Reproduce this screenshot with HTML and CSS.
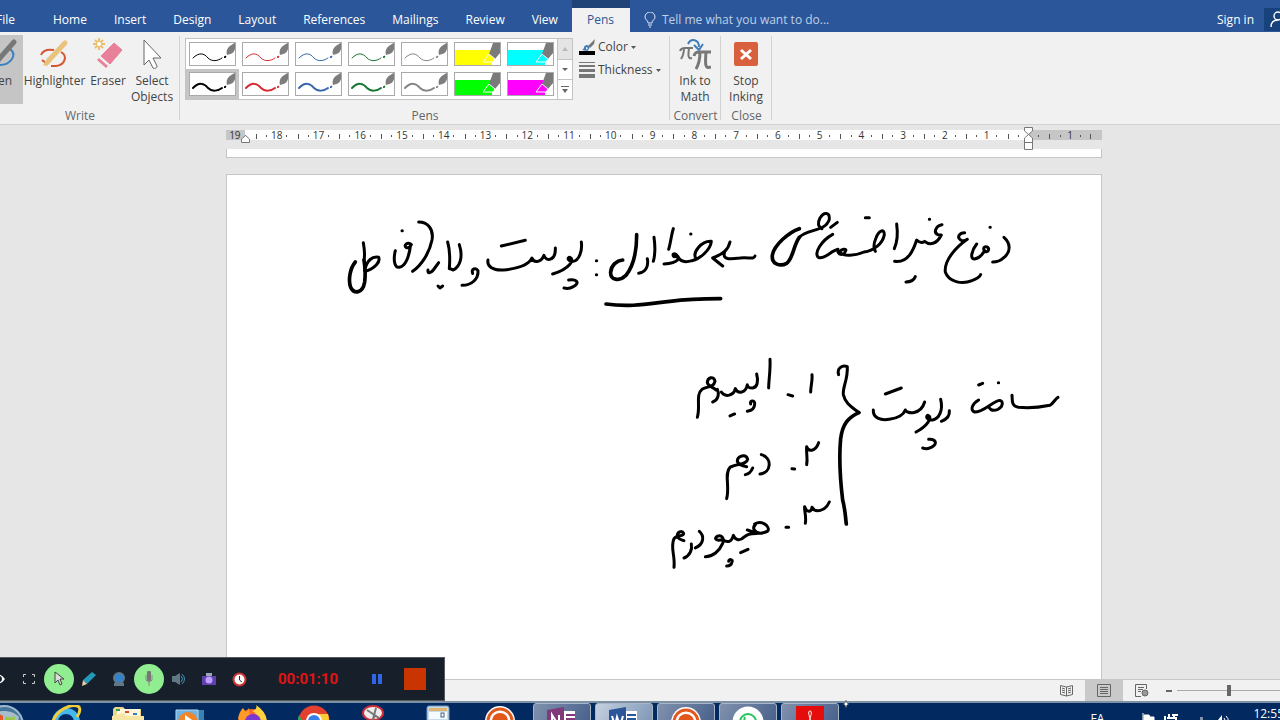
FILE: index.html
```html
<!DOCTYPE html>
<html lang="en">
    <head>
        <meta charset="utf-8">
        <title>Word - Pens</title>
        <link rel="stylesheet" href="styles.css">
    </head>
    <body>
        <svg class="defs">
            <symbol id="pen" viewBox="0 0 45 22">
                <path d="M3 15 C9 9 14 10 18 15 C22 19 28 18 32 15" fill="none" stroke="currentColor" stroke-linecap="round"/>
                <path d="M34 14 l2 -1 -1 2z" fill="currentColor" stroke="currentColor" stroke-width="1"/>
                <path d="M37 12 C35 6 40 2 45 0 V6 C44 10 41 11 37 12z" fill="#7d7d7d" stroke="none"/>
            </symbol>
            <symbol id="marker" viewBox="0 0 45 22">
                <path d="M0 7 H37 V22 H0z" fill="currentColor"/>
                <path d="M38 0 H45 V10 L40 16 L34 11z" fill="#7a7a7a"/>
                <path d="M34 11 L28 19 H38 L40 16z" fill="currentColor" stroke="#fff"/>
            </symbol>
            <symbol id="orange" viewBox="0 0 32 32">
                <circle cx="16" cy="16" r="15" fill="#fff"/>
                <circle cx="16" cy="16" r="12" fill="none" stroke="#e2571b" stroke-width="3"/>
                <circle cx="16" cy="16" r="8" fill="#e2571b"/>
            </symbol>
        </svg>

        <header class="titlebar">
            <nav class="tabs">
                <button class="tab">File</button>
                <button class="tab">Home</button>
                <button class="tab">Insert</button>
                <button class="tab">Design</button>
                <button class="tab">Layout</button>
                <button class="tab">References</button>
                <button class="tab">Mailings</button>
                <button class="tab">Review</button>
                <button class="tab">View</button>
                <button class="tab active">Pens</button>
            </nav>
            <button class="tellme">
                <svg width="12" height="16" viewBox="0 0 12 16" fill="none" stroke="#dce6f4"><path d="M4 11 C4 8 1 8 1 5 A4.5 4.5 0 0 1 11 5 C11 8 8 8 8 11z M4 13 H8 M5 15 H7"/></svg>
                Tell me what you want to do...
            </button>
            <button class="signin">Sign in</button>
            <button class="share" aria-label="Share">
                <svg width="18" height="18" viewBox="0 0 18 18" fill="none" stroke="#fff" stroke-width="1.4"><circle cx="8" cy="6" r="4"/><path d="M1 17 C1 12 4 10 8 10 M12 13 h6 M15 10 v6"/></svg>
            </button>
        </header>

        <section class="ribbon">
            <div class="group write">
                <div class="tools">
                    <button class="tool pressed">
                        <svg width="32" height="32" viewBox="0 0 32 32" fill="none"><path d="M12 12 C1 17 2 27 14 27 C24 27 32 17 24 11" stroke="#3b7fc4" stroke-width="2"/><path d="M28 4 L13 21" stroke="#777" stroke-width="5" stroke-linecap="round"/><path d="M11 19 L8 26 L15 23z" fill="#777"/></svg>
                        <span>Pen</span>
                    </button>
                    <button class="tool wide">
                        <svg width="32" height="32" viewBox="0 0 32 32" fill="none"><path d="M2 17 C4 12 9 11 15 12 M22 14 C29 18 26 27 17 28 H12 M3 22 L7 25" stroke="#d65532" stroke-width="2"/><path d="M26 5 L11 21" stroke="#e9c27c" stroke-width="5" stroke-linecap="round"/><path d="M9 19 L4 27 L8 28 L13 23z" fill="#e9c27c"/></svg>
                        <span>Highlighter</span>
                    </button>
                    <button class="tool">
                        <svg width="32" height="32" viewBox="0 0 32 32"><path d="M7 0 V12 M1 6 H13 M3 2 L11 10 M11 2 L3 10" stroke="#eabf69" stroke-width="2"/><circle cx="7" cy="6" r="2" fill="#fff"/><path d="M22 5 L30 12 L18 26 L9 18z" fill="#e8809a" stroke="#e8809a" stroke-linejoin="round"/><path d="M7 20 L16 28 L14 30 L5 22z" fill="#e8809a"/></svg>
                        <span>Eraser</span>
                    </button>
                    <button class="tool">
                        <svg width="32" height="32" viewBox="0 0 32 32"><path d="M8 2 V27 L13 22 L17 30 C19 31 21 30 21 28 L17 20 H25z" fill="#fff" stroke="#666"/></svg>
                        <span>Select<br>Objects</span>
                    </button>
                </div>
                <div class="caption">Write</div>
            </div>

            <div class="group pens">
                <div class="tools">
                    <div class="gallery">
                        <div class="swatches">
                            <button class="swatch black thin" aria-label="Black pen"><svg><use href="#pen"/></svg></button>
                            <button class="swatch red thin" aria-label="Red pen"><svg><use href="#pen"/></svg></button>
                            <button class="swatch blue thin" aria-label="Blue pen"><svg><use href="#pen"/></svg></button>
                            <button class="swatch green thin" aria-label="Green pen"><svg><use href="#pen"/></svg></button>
                            <button class="swatch gray thin" aria-label="Gray pen"><svg><use href="#pen"/></svg></button>
                            <button class="swatch yellow" aria-label="Yellow highlighter"><svg><use href="#marker"/></svg></button>
                            <button class="swatch cyan" aria-label="Cyan highlighter"><svg><use href="#marker"/></svg></button>
                            <button class="swatch black thick selected" aria-label="Black thick pen"><svg><use href="#pen"/></svg></button>
                            <button class="swatch red thick" aria-label="Red thick pen"><svg><use href="#pen"/></svg></button>
                            <button class="swatch blue thick" aria-label="Blue thick pen"><svg><use href="#pen"/></svg></button>
                            <button class="swatch green thick" aria-label="Green thick pen"><svg><use href="#pen"/></svg></button>
                            <button class="swatch gray thick" aria-label="Gray thick pen"><svg><use href="#pen"/></svg></button>
                            <button class="swatch lime" aria-label="Green highlighter"><svg><use href="#marker"/></svg></button>
                            <button class="swatch magenta" aria-label="Pink highlighter"><svg><use href="#marker"/></svg></button>
                        </div>
                        <div class="scroller">
                            <button disabled aria-label="Row up"><svg width="6" height="4"><path d="M0 4 L3 0 L6 4z" fill="#bbb"/></svg></button>
                            <button aria-label="Row down"><svg width="6" height="4"><path d="M0 0 L3 3 L6 0z" fill="#666"/></svg></button>
                            <button aria-label="More"><svg width="8" height="8"><path d="M0 0 H8 V1 H0z M1 3 L4 7 L7 3z" fill="#666"/></svg></button>
                        </div>
                    </div>
                    <div class="options">
                        <button class="option">
                            <svg width="16" height="16" viewBox="0 0 16 16"><path d="M16 0 L15 5 L11 9 L9 7z" fill="#777"/><path d="M3 11 C6 10 4 6 8 6 C11 7 11 10 8 12z" fill="#3f7cb8"/><path d="M7 8 l2 1 -2 2z" fill="#fff"/><path d="M0 12 H16 V16 H0z"/></svg>
                            Color<svg width="5" height="3"><path d="M0 0 H5 L2.500 3z" fill="#555"/></svg>
                        </button>
                        <button class="option">
                            <svg width="16" height="16" viewBox="0 0 16 16"><path d="M0 0 H16 V1 H0z M0 3 H16 V5 H0z M0 7 H16 V10 H0z M0 12 H16 V16 H0z" fill="#777"/></svg>
                            Thickness<svg width="5" height="3"><path d="M0 0 H5 L2.500 3z" fill="#555"/></svg>
                        </button>
                    </div>
                </div>
                <div class="caption">Pens</div>
            </div>

            <div class="group small">
                <div class="tools">
                    <button class="tool">
                        <svg width="32" height="32" viewBox="0 0 32 32" fill="none"><path d="M1 13 C2 10 4 10 6 10 H14 M5 10 C5 16 4 18 2 21 M10 10 C9 18 9 21 13 20" stroke="#777" stroke-width="2"/><path d="M15 18 C16 14 18 14 20 14 H32 M21 14 C21 22 20 26 17 31 M27 14 C26 27 26 31 32 29" stroke="#777" stroke-width="3"/><path d="M9 6 C12 0 20 1 20 9" stroke="#3f7cb8" stroke-width="2"/><path d="M15 7 L20 12 L24 6" stroke="#3f7cb8" stroke-width="2"/></svg>
                        <span>Ink to<br>Math</span>
                    </button>
                </div>
                <div class="caption">Convert</div>
            </div>

            <div class="group small">
                <div class="tools">
                    <button class="tool">
                        <svg width="32" height="32" viewBox="0 0 32 32"><rect x="4" y="4" width="24" height="24" rx="2" fill="#d9603f"/><path d="M11 12 L21 21 M21 12 L11 21" stroke="#fff" stroke-width="3"/></svg>
                        <span>Stop<br>Inking</span>
                    </button>
                </div>
                <div class="caption">Close</div>
            </div>
        </section>

        <main class="workspace">
            <div class="ruler">
                <div class="cells">
                    <span>19</span><span>18</span><span>17</span><span>16</span><span>15</span><span>14</span><span>13</span><span>12</span><span>11</span><span>10</span><span>9</span><span>8</span><span>7</span><span>6</span><span>5</span><span>4</span><span>3</span><span>2</span><span>1</span><span></span><span>1</span>
                </div>
                <svg class="marker left" width="9" height="8" viewBox="0 0 9 8"><path d="M.5 7.500 V4 L4.500 .5 L8.500 4 V7.500z" fill="#fff" stroke="#777"/></svg>
                <svg class="marker right" width="9" height="23" viewBox="0 0 9 23"><path d="M.5 .5 H8.500 V4 L.5 11 V22.500 H8.500 V11 L.5 4z M.5 15.500 H8.500" fill="#fff" stroke="#777"/></svg>
            </div>
            <div class="prev-page"></div>
            <div class="page">
                <!-- ink layer -->
                <svg class="ink" viewBox="227 175 874 505" preserveAspectRatio="xMidYMin meet">
                    <g transform="translate(760 200) scale(.3333)">
                        <path d="M732 112 C752 130 754 156 730 174 C720 184 708 186 698 186 M690 82 h1"/>
                        <path d="M650 132 C636 150 628 178 644 177 C662 174 668 162 674 152 C664 140 682 136 686 146 C686 156 676 158 672 152"/>
                        <path d="M614 98 C598 98 590 112 602 120 C608 124 616 122 622 118 C590 140 552 180 556 216 C566 246 606 254 636 242 C652 236 660 228 662 224"/>
                        <path d="M546 74 C526 78 520 98 534 104 L544 105 C530 134 508 136 494 124 C486 130 478 128 470 120 C462 145 446 190 404 184 M508 58 h1 M438 246 C450 246 462 240 466 230"/>
                        <path d="M410 72 C414 100 410 130 403 146"/>
                        <path d="M218 103 C184 122 160 160 176 173 C196 178 210 154 234 148 C230 166 252 168 256 154 C264 144 240 146 242 156 C246 172 290 166 312 156 C340 152 368 132 373 104 C373 84 356 92 348 114 C340 132 340 144 346 154 M316 53 L328 53"/>
                        <path class="bold" d="M118 86 C88 96 42 134 37 166 C34 194 62 200 80 190 C100 174 98 142 118 112"/>
                        <path d="M118 112 C142 86 196 96 208 58 C210 36 192 34 180 54 C172 70 174 80 186 86 M212 82 L232 67"/>
                    </g>
                    <g transform="translate(590 200) scale(.3333)">
                        <path d="M420 126 C414 152 398 162 368 174 L398 198 M404 156 C396 180 420 178 450 174 C474 170 492 180 495 168"/>
                        <path d="M318 176 C306 158 334 122 364 124 C362 148 330 178 306 182 C286 188 270 184 264 170 C254 156 244 162 252 170 C276 168 268 190 222 192 M302 102 h1"/>
                        <path d="M250 86 C244 104 242 128 236 148 M192 112 C196 140 194 170 190 184 M172 176 C176 198 168 216 146 220"/>
                        <path class="bold" d="M140 104 C140 150 132 196 108 226 C88 246 60 240 62 216 C64 195 80 182 98 180"/>
                        <path d="M19 182 h1 M19 224 h1"/>
                        <path class="bold" d="M48 312 C120 322 170 312 240 304 C300 296 340 296 392 296"/>
                    </g>
                    <g transform="translate(340 200) scale(.3333)">
                        <path d="M724 126 C728 155 716 182 700 184 C684 186 680 172 690 172 C705 178 690 206 638 222 M686 240 C712 236 720 250 700 260 C690 266 680 266 672 264"/>
                        <path d="M444 180 C440 200 460 212 490 210 C535 206 566 196 576 174 C580 188 602 190 612 166 C616 184 648 186 646 144 M484 138 L556 121"/>
                        <path d="M398 220 C392 206 408 202 414 212 C416 236 396 256 366 256"/>
                        <path d="M323 126 C330 150 330 180 328 206 M358 134 C370 170 360 200 340 210 L330 206"/>
                        <path d="M264 210 C262 222 272 220 280 210 L296 188 M294 258 L300 264 L308 258"/>
                        <path d="M236 66 C262 66 282 86 276 120 C268 160 244 196 218 214"/>
                        <path d="M166 152 C160 176 162 204 178 202 C196 200 208 170 212 132 C202 126 190 136 198 142 C206 146 210 142 214 134 M186 92 h1"/>
                        <path class="bold" d="M72 180 C76 206 76 230 74 246 C68 282 42 282 32 262 C24 240 30 205 46 186"/>
                        <path d="M70 128 C74 150 74 170 72 180 M74 212 C80 180 98 168 116 172 C122 186 104 206 76 214"/>
                    </g>
                    <g transform="translate(660 350) scale(.3333)">
                        <path d="M456 74 C458 90 452 110 452 126 M384 134 L398 138 M330 28 C332 60 326 90 326 114"/>
                        <path d="M290 72 C296 94 292 112 278 114 C266 114 262 110 262 104 C258 126 236 136 226 116 C222 136 196 144 184 126 M172 118 C178 130 176 150 158 156 M210 198 L224 192 M272 162 C268 150 286 150 284 162 C284 178 274 182 262 184"/>
                        <path d="M112 202 C122 170 106 134 126 118 C142 108 160 114 165 94 C162 76 142 82 142 98 C144 108 160 112 168 120"/>
                        <path d="M536 74 C530 56 546 44 562 50 C564 90 548 108 550 134 C556 162 580 174 597 188"/>
                        <path class="bold" d="M597 188 C566 202 548 220 542 266 C536 330 542 400 548 450 C556 480 556 500 559 522"/>
                        <path d="M440 344 C444 325 438 310 440 290 C444 306 466 306 476 278 M396 356 L404 357"/>
                        <path d="M304 314 C338 324 334 368 300 372 M278 354 C274 364 266 372 256 374"/>
                        <path d="M200 446 C210 410 192 370 210 352 C228 340 260 346 263 328 C258 310 232 318 232 334 C236 344 248 348 260 350"/>
                        <path d="M436 520 C440 500 432 480 434 470 C440 488 454 488 456 472 C466 490 496 484 508 456 M378 532 L386 532"/>
                        <path d="M284 522 C308 508 330 532 324 542 C308 554 284 550 262 540 M286 524 C276 534 282 546 300 550 M322 544 C300 556 268 544 254 560 C240 574 226 572 220 556 C216 576 202 580 188 568 C174 574 160 568 170 560 C184 552 194 564 188 580 C178 604 158 620 136 620 M242 608 L264 598 M206 634 C206 626 220 628 216 636 C214 646 208 648 200 648"/>
                        <path d="M118 544 C134 558 132 582 106 594 M94 582 C98 600 88 618 72 624 M42 652 C46 614 30 594 42 566 C52 552 70 562 71 550 C66 540 50 546 52 560 C60 572 66 570 72 572"/>
                    </g>
                    <g transform="translate(830 350) scale(.3333)">
                        <path d="M546 136 C548 150 542 168 566 172 C600 176 640 170 660 166 C670 160 676 146 684 142"/>
                        <path d="M446 150 C428 160 418 180 434 186 C456 186 476 166 496 156 C520 142 524 166 504 178 C484 186 478 176 476 168 M446 105 L458 100 M505 98 h1"/>
                        <path d="M358 182 C360 198 350 208 334 214"/>
                        <path d="M332 148 C340 180 328 206 308 210 C290 212 286 198 294 196 C310 202 290 230 258 246 M296 268 C318 266 324 282 304 292 C294 298 284 296 278 294"/>
                        <path d="M130 180 C128 204 152 212 178 208 C206 204 220 196 226 180 C230 192 272 196 284 156 M166 132 L214 114"/>
                    </g>
                </svg>
            </div>
        </main>

        <footer class="statusbar">
            <button aria-label="Read mode"><svg width="13" height="13" viewBox="0 0 13 13" fill="none" stroke="#666"><path d="M.5 1.500 L6.500 3 L12.500 1.500 V10.500 L6.500 12 L.5 10.500z M6.500 3 V12 M2 4 l3 1 M2 6 l3 1 M2 8 l3 1 M8 5 l3 -1 M8 7 l3 -1 M8 9 l3 -1"/></svg></button>
            <button class="on" aria-label="Print layout"><svg width="14" height="13" viewBox="0 0 14 13" fill="none" stroke="#666"><path d="M.5 .5 H13.500 V12.500 H.5z M3 3.500 H11 M3 5.500 H11 M3 7.500 H11 M3 9.500 H11"/></svg></button>
            <button aria-label="Web layout"><svg width="14" height="13" viewBox="0 0 14 13" fill="none" stroke="#666"><path d="M6 12.500 H.5 V.5 H11.500 V5 M3 3.500 H9 M3 5.500 H8 M3 7.500 H6"/><circle cx="10" cy="9" r="3" fill="#999"/></svg></button>
            <button class="minus" aria-label="Zoom out"><svg width="6" height="2"><path d="M0 0 H6 V2 H0z" fill="#666"/></svg></button>
            <input class="zoom" type="range" min="10" max="190" value="100" aria-label="Zoom">
        </footer>

        <footer class="taskbar">
            <div class="apps">
                <button aria-label="Start"><svg width="40" height="40" viewBox="0 0 40 40"><circle cx="20" cy="20" r="19" fill="#46759a" stroke="#9bb8cc" stroke-width="2"/><path d="M5 12 C12 4 28 4 35 12 L34 18 H6z" fill="#a7bdcb"/><path d="M10 11 Q15 8 19 11 V20 H9z" fill="#e8592a"/><path d="M21 11 Q26 14 31 11 L30 20 H21z" fill="#9ac93c"/></svg></button>
                <button aria-label="Internet Explorer"><svg width="32" height="32" viewBox="0 0 32 32" fill="none"><circle cx="16" cy="17" r="11" stroke="#45b8ed" stroke-width="6"/><path d="M7 17 H26" stroke="#a6e2fa" stroke-width="4"/><path d="M2 19 C6 4 22 -2 29 2 C31 5 29 9 27 12" stroke="#f3ce39" stroke-width="3"/></svg></button>
                <button aria-label="Explorer"><svg width="32" height="32" viewBox="0 0 32 32"><path d="M1 4 L3 2 H11 L13 4 H29 V30 H1z" fill="#ecd58a"/><path d="M5 4 h23 v8 H5z" fill="#fff7dc"/><path d="M4 4 h4 v2 H4z" fill="#36a14c"/><path d="M13 6 h4 v2 h-4z" fill="#d14d2b"/><path d="M21 8 h4 v2 h-4z" fill="#347fc2"/><path d="M0 11 L12 8 L15 11 H32 V32 H0z" fill="#f7e5a4"/></svg></button>
                <button aria-label="Media Player"><svg width="32" height="32" viewBox="0 0 32 32"><path d="M8 5 H30 V30 H8z" fill="#3b82b4"/><path d="M2 5 H24 V30 H2z" fill="#71b2df" stroke="#b4daf1"/><circle cx="14" cy="17" r="10" fill="#ee862c"/><path d="M11 10 L21 17 L11 23z" fill="#fff"/></svg></button>
                <button aria-label="Firefox"><svg width="32" height="32" viewBox="0 0 32 32"><circle cx="16" cy="18" r="14" fill="#ff6330"/><path d="M2 14 Q3 7 7 3 L10 7 L13 3 L14 10 L6 17z" fill="#ff9a27"/><path d="M16 6 Q22 4 20 0 Q31 7 31 18 L27 28 Q27 12 16 6" fill="#ffd23b"/><circle cx="17" cy="17" r="8" fill="#7b38d0"/></svg></button>
                <button aria-label="Chrome"><svg width="32" height="32" viewBox="0 0 32 32"><circle cx="16" cy="16" r="15.500" fill="#e3402f"/><path d="M1 10 L9 23 L16 31 C5 31 -3 20 1 10" fill="#30a650"/><path d="M16 9 H30 C34 23 25 31 16 31z" fill="#fbcc31"/><circle cx="16" cy="16" r="8" fill="#fff"/><circle cx="16" cy="16" r="6" fill="#387ee8"/></svg></button>
                <button aria-label="Snipping Tool"><svg width="32" height="32" viewBox="0 0 32 32"><ellipse cx="13" cy="8" rx="10" ry="7" fill="#eee" stroke="#cf2e39" stroke-width="2"/><path d="M7 5 L19 13 M16 3 L13 14 M15 11 L5 25" stroke="#777" stroke-width="2"/></svg></button>
                <button aria-label="Calculator"><svg width="24" height="32" viewBox="0 0 24 32"><rect x="1" y="1" width="22" height="28" rx="2" fill="#c6dced" stroke="#7999b5"/><path d="M3 3 H21 V6 H3z" fill="#e2b36f"/><path d="M3 7 H21 V14 H3z" fill="#f5fbff"/><rect x="15" y="8" width="3" height="4" fill="none" stroke="#416280"/></svg></button>
                <button aria-label="Recorder"><svg width="32" height="32"><use href="#orange"/></svg></button>
                <button class="open" aria-label="OneNote"><svg width="32" height="32" viewBox="0 0 32 32"><path d="M14 5 H29 V28 H14z" fill="#fff"/><path d="M20 9 h9 M20 13 h9 M20 17 h9" stroke="#80397b" stroke-width="2"/><path d="M1 4 L18 1 V31 L1 28z" fill="#80397b"/><path d="M6 20 V9 L13 20 V9" stroke="#fff" stroke-width="2" fill="none"/></svg></button>
                <button class="open current" aria-label="Word"><svg width="32" height="32" viewBox="0 0 32 32"><path d="M14 5 H29 V28 H14z" fill="#fff"/><path d="M19 9 h9 M19 13 h9 M19 17 h9" stroke="#2b579a" stroke-width="2"/><path d="M1 4 L18 1 V31 L1 28z" fill="#2b579a"/><path d="M4 10 L7 20 L9 11 L12 20 L15 10" stroke="#fff" stroke-width="2" fill="none"/></svg></button>
                <button class="open" aria-label="Screen recorder"><svg width="32" height="32"><use href="#orange"/></svg></button>
                <button class="open" aria-label="WhatsApp"><svg width="32" height="32" viewBox="0 0 32 32"><circle cx="16" cy="16" r="15.500" fill="#fff"/><circle cx="16" cy="16" r="8" fill="none" stroke="#28c55a" stroke-width="2"/><path d="M13 11 C11 15 15 20 20 20" stroke="#28c55a" stroke-width="2" fill="none"/></svg></button>
                <button class="open" aria-label="Acrobat"><svg width="28" height="32" viewBox="0 0 28 32"><path d="M0 0 H28 V32 H0z" fill="#e50c0c"/><path d="M14 5 C11 5 14 11 14 14 L9 20 M14 14 L19 20 M14 5 C17 5 14 11 14 14" stroke="#fff" fill="none"/></svg></button>
            </div>
            <div class="tray">
                <span class="lang">FA</span>
                <svg width="14" height="16" viewBox="0 0 14 16"><path d="M2 16 V1 M3 3 H8 L9 5 H13 V12 H3z" fill="#fff" stroke="#fff"/></svg>
                <svg width="16" height="16" viewBox="0 0 16 16"><path d="M3 6 H12 V15 M5 6 V2 M10 6 V2 M1 4 V15 M8 3 H14" fill="none" stroke="#fff" stroke-width="2"/></svg>
                <svg width="16" height="16" viewBox="0 0 16 16"><path d="M11 16 V5 H14 V16z M7 16 V9 H9 V16z" fill="#8292ae"/></svg>
                <svg width="16" height="16" viewBox="0 0 16 16"><path d="M1 8 H4 L8 3 V16 L4 12 H1z" fill="#fff"/><path d="M10 6 Q13 9 10 13 M12 4 Q17 9 12 15" stroke="#fff" fill="none"/></svg>
                <span class="clock">12:55</span>
            </div>
        </footer>

        <!-- floating recorder window -->
        <div class="recorder">
            <button aria-label="Preview"><svg width="14" height="12" viewBox="0 0 14 12"><path d="M0 6 Q7 -3 13 6 Q7 15 0 6z" fill="#fff"/><circle cx="7" cy="6" r="3" fill="#17202a"/></svg></button>
            <button aria-label="Full screen"><svg width="12" height="10" viewBox="0 0 12 10"><path d="M.5 3 V.5 H3 M9 .5 H11.500 V3 M11.500 7 V9.500 H9 M3 9.500 H.5 V7" fill="none" stroke="#ccc"/></svg></button>
            <button class="on" aria-label="Cursor"><svg width="12" height="16" viewBox="0 0 12 16"><path d="M2 1 V12 L5 9 L7 14 L9 13 L7 8 H11z" fill="#ddd" stroke="#444"/></svg></button>
            <button aria-label="Draw"><svg width="16" height="16" viewBox="0 0 16 16"><path d="M11 1 L15 4 L6 13 L2 9z" fill="#239ab9"/><path d="M2 9 L6 13 L1 15z" fill="#eec9a8"/></svg></button>
            <button aria-label="Webcam"><svg width="14" height="14" viewBox="0 0 14 14"><path d="M2 11 H12 V14 H2z" fill="#607786"/><circle cx="7" cy="6" r="6" fill="#607786"/><circle cx="7" cy="6" r="4" fill="#3183cf"/></svg></button>
            <button class="on" aria-label="Microphone"><svg width="8" height="16" viewBox="0 0 8 16"><rect x="2" y="0" width="4" height="10" rx="1" fill="#777"/><path d="M1 4 V9 Q4 13 7 9 V4 M4 10 V15" fill="none" stroke="#888"/></svg></button>
            <button aria-label="Sound"><svg width="15" height="14" viewBox="0 0 15 14"><path d="M0 4 H3 L8 1 V13 L3 10 H0z" fill="#607786"/><path d="M9 4 Q12 7 9 10 M10 2 Q15 7 10 12" fill="none" stroke="#4796bc"/></svg></button>
            <button aria-label="Snapshot"><svg width="14" height="14" viewBox="0 0 14 14"><path d="M0 4 H4 V2 H10 V4 H14 V13 H0z" fill="#6040ae"/><path d="M4 1 H10 V4 H4z" fill="#9ba6bd"/><circle cx="7" cy="8" r="3.500" fill="#bda0ff"/></svg></button>
            <button aria-label="Schedule"><svg width="15" height="15" viewBox="0 0 15 15"><circle cx="7.500" cy="7.500" r="6" fill="#fff" stroke="#c63232" stroke-width="2"/><path d="M7.500 4 V8 L10 10" fill="none" stroke="#333"/></svg></button>
            <output class="timer">00:01:10</output>
            <button class="pause" aria-label="Pause"><svg width="12" height="12"><path d="M1 1 H5 V11 H1z M7 1 H11 V11 H7z" fill="#3265e6"/></svg></button>
            <button class="stop" aria-label="Stop"><svg width="22" height="22"><path d="M0 0 H22 V22 H0z" fill="#c83402"/></svg></button>
        </div>
        <svg class="pointer" width="6" height="8" viewBox="0 0 6 8"><path d="M3 0 L4 3 L6 4 L4 5 L3 8 L2 5 L0 4 L2 3z" fill="#fff" stroke="#333" stroke-width=".5"/></svg>
    </body>
</html>
```
FILE: styles.css
```css
* { box-sizing: border-box; }
body {
    margin: 0;
    height: 100vh;
    display: flex;
    flex-direction: column;
    overflow: hidden;
    background-color: #e6e6e6;
    color: #444;
    font-family: "Open Sans", "Noto Sans", sans-serif;
    font-size: 12px;
    line-height: 16px;
}
button {
    border: 0;
    padding: 0;
    background: none;
    color: inherit;
    font: inherit;
}
svg { flex: none; }
.defs {
    position: absolute;
    width: 0;
    height: 0;
}

/* title bar and tabs */
.titlebar {
    flex: none;
    display: flex;
    height: 32px;
    background-color: #2b579a;
    color: #fff;
}
.tabs {
    display: flex;
    margin-left: -17px;
}
.tab {
    padding: 8px 14px 0 13px;
}
.tab:first-child { margin-right: 11px; }
.tab.active {
    padding: 0 16px 0 15px;
    border-top: 8px solid #1f4377;
    background-color: #f1f1f1;
    color: #2b579a;
}
.tellme {
    display: flex;
    align-items: center;
    gap: 6px;
    padding: 8px 0 0 14px;
    color: #bfcfe6;
}
.signin {
    margin-left: auto;
    padding: 8px 10px 0;
}
.share {
    width: 16px;
    height: 23px;
    margin-top: 8px;
    padding: 2px 0 0 6px;
    overflow: hidden;
    background-color: #17427c;
}

/* ribbon */
.ribbon {
    flex: none;
    display: flex;
    height: 93px;
    background-color: #f1f1f1;
    border-bottom: 1px solid #d2d2d2;
}
.group {
    position: relative;
    display: flex;
    flex-direction: column;
    justify-content: space-between;
    padding: 3px 0 0;
}
.group::after {
    content: "";
    position: absolute;
    right: 0;
    top: 4px;
    bottom: 4px;
    border-right: 1px solid #d2d2d2;
}
.write {
    width: 203px;
    margin-left: -23px;
    padding-left: 3px;
}
.pens { width: 490px; }
.small { width: 51px; }
.tools { display: flex; }
.tool {
    display: flex;
    flex-direction: column;
    align-items: center;
    gap: 3px;
    width: 44px;
    height: 69px;
    padding-top: 3px;
}
.small .tool { width: 50px; }
.tool.wide { width: 63px; }
.tool.pressed {
    width: 43px;
    background-color: #c5c5c5;
}
.caption {
    text-align: center;
    color: #666;
}
.gallery {
    display: flex;
    margin: 3px 0 0 5px;
    border: 1px solid #c3c3c3;
    background-color: #fff;
}
.swatches {
    display: grid;
    grid-template-columns: repeat(7, 53px);
    grid-auto-rows: 30px;
}
.swatch { padding: 3px; }
.swatch svg {
    display: block;
    width: 47px;
    height: 24px;
    border: 1px solid #aaa;
    background-color: #fff;
}
.selected { background-color: #c5c5c5; }
.thin { stroke-width: 1; }
.thick { stroke-width: 2; }
.black { color: #000; }
.red { color: #d82a30; }
.blue { color: #3565ad; }
.green { color: #197534; }
.gray { color: #858585; }
.yellow { color: #ff0; }
.cyan { color: #0ff; }
.lime { color: #0f0; }
.magenta { color: #f0f; }
.scroller {
    display: grid;
    grid-template-rows: repeat(3, 1fr);
    width: 15px;
    border-left: 1px solid #c3c3c3;
}
.scroller button {
    display: flex;
    align-items: center;
    justify-content: center;
}
.scroller button + button { border-top: 1px solid #c3c3c3; }
.scroller button:disabled { background-color: #e4e4e4; }
.options {
    display: flex;
    flex-direction: column;
    gap: 7px;
    padding: 4px 0 0 6px;
}
.option {
    display: flex;
    align-items: center;
    gap: 3px;
}

/* document */
.workspace {
    flex: 1;
    min-height: 0;
    display: flex;
    flex-direction: column;
    align-items: center;
    padding: 5px 0 0 48px;
}
.workspace > div {
    width: 100%;
    max-width: 876px;
}
.ruler {
    position: relative;
    flex: none;
    height: 10px;
    margin-bottom: 9px;
    background: linear-gradient(90deg, #c6c6c6 19px, #fff 19px, #fff 802px, #c6c6c6 802px);
}
.cells {
    display: flex;
    margin-left: -12px;
    margin-right: 11px;
    clip-path: inset(0 0 0 12px);
}
.cells span {
    flex: 1;
    height: 10px;
    text-align: center;
    color: #333;
    font-size: 10px;
    line-height: 11px;
    background:
        linear-gradient(#555, #555) 0 4px / 1px 5px no-repeat,
        linear-gradient(#555, #555) 25% 5px / 1px 2px no-repeat,
        linear-gradient(#555, #555) 75% 5px / 1px 2px no-repeat;
}
.cells span:last-child {
    background:
        linear-gradient(#555, #555) 0 4px / 1px 5px no-repeat,
        linear-gradient(#555, #555) 100% 4px / 1px 5px no-repeat,
        linear-gradient(#555, #555) 25% 5px / 1px 2px no-repeat,
        linear-gradient(#555, #555) 75% 5px / 1px 2px no-repeat;
}
.marker {
    position: absolute;
}
.marker.left {
    left: 15px;
    top: 5px;
}
.marker.right {
    left: 798px;
    top: -3px;
}
.prev-page {
    flex: none;
    height: 9px;
    margin-bottom: 16px;
    background-color: #fff;
    border: 1px solid #c6c6c6;
    border-top: 0;
}
.page {
    flex: 1;
    min-height: 0;
    overflow: hidden;
    background-color: #fff;
    border: 1px solid #c6c6c6;
    border-bottom: 0;
}
.ink {
    display: block;
    width: 100%;
    fill: none;
    stroke: #000;
    stroke-width: 9;
    stroke-linecap: round;
    stroke-linejoin: round;
}
.bold { stroke-width: 11; }

/* status bar */
.statusbar {
    flex: none;
    display: flex;
    justify-content: flex-end;
    height: 22px;
    background-color: #f1f1f1;
    border-top: 1px solid #c6c6c6;
}
.statusbar button {
    display: flex;
    align-items: center;
    justify-content: center;
    width: 38px;
}
.statusbar .on { background-color: #c9c9c9; }
.statusbar .minus { width: 16px; }
.zoom {
    appearance: none;
    width: 104px;
    margin: 0 -1px 0 0;
    background: linear-gradient(#aaa, #aaa) center / 100% 1px no-repeat;
}
.zoom::-webkit-slider-thumb {
    appearance: none;
    width: 4px;
    height: 11px;
    background-color: #666;
}

/* taskbar */
.taskbar {
    flex: none;
    display: flex;
    justify-content: space-between;
    height: 19px;
    overflow: hidden;
    background-color: #022a60;
    border-top: 2px solid #7d91a5;
    color: #fff;
}
.apps {
    display: flex;
    gap: 4px;
    margin-left: -25px;
}
.apps button {
    display: flex;
    justify-content: center;
    width: 58px;
    height: 40px;
    padding-top: 2px;
}
.apps .open {
    border: 1px solid #a9b5c5;
    border-radius: 3px;
    background: linear-gradient(120deg, #8191ae, #3e5886);
}
.apps .current { background: linear-gradient(120deg, #c5d1df, #728eb1); }
.tray {
    display: flex;
    gap: 9px;
    padding-top: 9px;
}
.lang {
    margin: -1px 28px 0 0;
}
.clock {
    margin: -6px -4px 0 14px;
}

/* recorder */
.recorder {
    position: absolute;
    left: 0;
    bottom: 19px;
    display: flex;
    align-items: center;
    width: 445px;
    height: 44px;
    overflow: hidden;
    border: 1px solid #555a5f;
    border-left: 0;
    background-color: #17202a;
}
.recorder button {
    flex: none;
    display: flex;
    align-items: center;
    justify-content: center;
    width: 30px;
    height: 30px;
}
.recorder button:first-child { margin-left: -16px; }
.recorder .on {
    border-radius: 50%;
    background-color: #90ee90;
}
.timer {
    width: 84px;
    margin-left: 12px;
    text-align: center;
    color: #e01414;
    font-family: Roboto, sans-serif;
    font-size: 15px;
    font-weight: bold;
}
.recorder .pause { margin-left: 12px; }
.recorder .stop { margin-left: 8px; }
.pointer {
    position: absolute;
    left: 843px;
    bottom: 12px;
}
```
